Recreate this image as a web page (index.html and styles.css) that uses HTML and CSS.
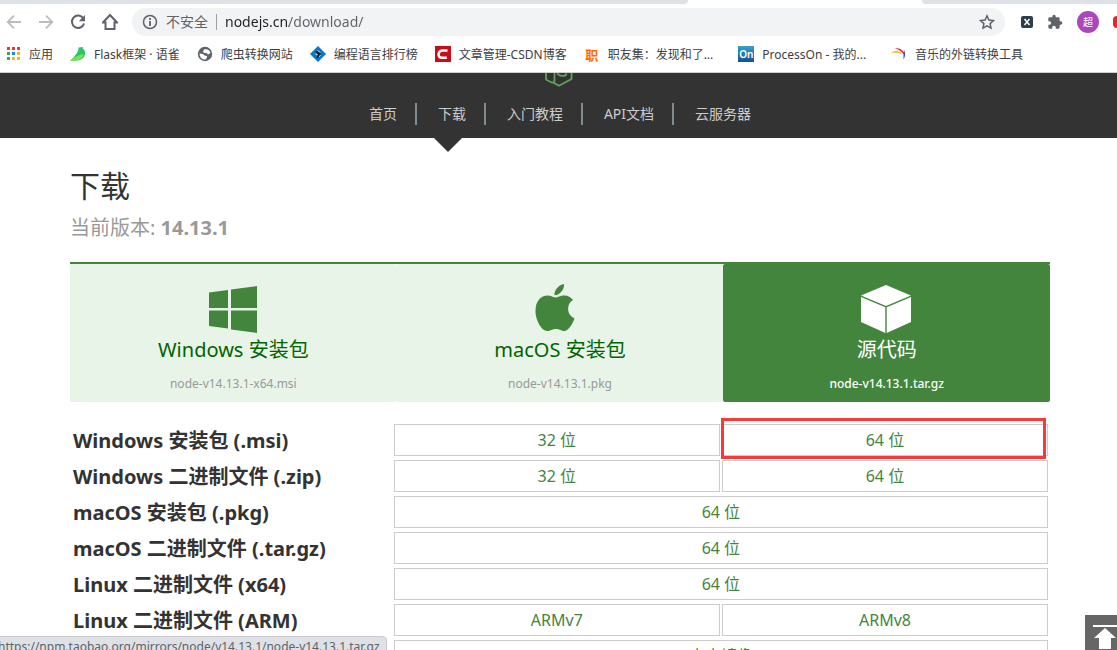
FILE: index.html
```html
<!DOCTYPE html>
<html lang="zh-CN">
<head>
<meta charset="utf-8">
<title>下载 | Node.js 中文网</title>
<link rel="stylesheet" href="styles.css">
</head>
<body>
<div class="browser">
  <div class="tabstrip"><span class="tab-bg"></span><span class="tab-active"></span><span class="tab-bg tab-bg-end"></span></div>
  <div class="toolbar">
    <button class="tool dim" aria-label="后退"><svg width="16" height="16" viewBox="0 0 16 16"><path d="M15 8H2M8 1.700L1.700 8 8 14.300" fill="none" stroke="currentColor" stroke-width="1.800"/></svg></button>
    <button class="tool dim" aria-label="前进"><svg width="16" height="16" viewBox="0 0 16 16"><path d="M1 8h13M8 1.700L14.300 8 8 14.300" fill="none" stroke="currentColor" stroke-width="1.800"/></svg></button>
    <button class="tool" aria-label="重新加载"><svg width="16" height="16" viewBox="0 0 16 16"><path d="M13.300 4.200A6.200 6.200 0 1 0 14.100 9.500" fill="none" stroke="currentColor" stroke-width="2"/><path d="M15 1v6.200H8.800z" fill="currentColor"/></svg></button>
    <button class="tool" aria-label="主页"><svg width="16" height="18" viewBox="1 0 16 18"><path d="M9 2L2 9.500h2.500v6.500h9V9.500H16z" fill="none" stroke="currentColor" stroke-width="2"/></svg></button>
    <div class="omnibox">
      <svg width="16" height="16" viewBox="0 0 16 16"><circle cx="8" cy="8" r="6.500" fill="none" stroke="#5f6368" stroke-width="1.500"/><path d="M8 7v5M8 4v2" stroke="#5f6368" stroke-width="1.800"/></svg>
      <span class="insecure">不安全</span>
      <input class="url" type="text" aria-label="网址" value="nodejs.cn/download/">
      <button class="tool star" aria-label="添加书签"><svg width="16" height="16" viewBox="0 0 16 16"><path d="M8 1.800l1.900 4.200 4.600.500-3.400 3.100.900 4.500L8 11.800l-4 2.300.900-4.500L1.500 6.500 6.100 6z" fill="none" stroke="currentColor" stroke-width="1.500"/></svg></button>
    </div>
    <div class="extensions">
      <button class="tool" aria-label="扩展 X"><svg width="12" height="12" viewBox="0 0 12 12"><rect width="12" height="12" rx="2" fill="#2d3e48"/><path d="M3.500 3l5 6M8.500 3l-5 6" stroke="#fff" stroke-width="1.500"/></svg></button>
      <button class="tool" aria-label="扩展程序"><svg width="16" height="16" viewBox="0 0 24 24"><path d="M20.500 11H19V7a2 2 0 0 0-2-2h-4V3.500a2.500 2.500 0 0 0-5 0V5H4a2 2 0 0 0-2 2v3.800h1.500a2.700 2.700 0 0 1 0 5.400H2V20a2 2 0 0 0 2 2h3.800v-1.500a2.700 2.700 0 0 1 5.400 0V22H17a2 2 0 0 0 2-2v-4h1.500a2.500 2.500 0 0 0 0-5z" fill="#5f6368"/></svg></button>
      <button class="avatar">超</button>
      <span class="update"></span>
    </div>
  </div>
  <nav class="bookmarks" aria-label="书签">
    <a href="#"><svg width="14" height="14" viewBox="0 0 14 14"><path fill="#ea3b30" d="M0 0h3v3H0zM5 0h3v3H5zM10 0h3v3h-3z"/><path fill="#34a853" d="M0 5h3v3H0zM0 10h3v3H0z"/><path fill="#1a84f0" d="M5 5h3v3H5z"/><path fill="#fbb904" d="M10 5h3v3h-3zM5 10h3v3H5zM10 10h3v3h-3z"/></svg>应用</a>
    <a href="#"><svg width="16" height="16" viewBox="0 0 16 16"><path fill="#26c66c" d="M8.500 1.500L13 1l-.5 1.500c3 1 3.500 6 1 9-2 2.500-5 3.500-13.500 3.500C5 10 9 6 8.500 1.500z"/><path fill="#7be05a" d="M0 15C5 11 8 9 13.500 8c-.5 5-5 7-13.500 7z"/></svg>Flask框架 · 语雀</a>
    <a href="#"><svg width="16" height="16" viewBox="0 0 16 16"><circle cx="8" cy="8" r="7.200" fill="#5f6368"/><path d="M7 3.500C10 2.500 13 4 13.500 7L11 8.500 9.500 7H7L6 5.500zM2.500 7.500L6 8l1.500 1.500L10 10v1.500L8.500 13.500C5 14 2.500 11 2.500 7.500z" fill="#fff"/></svg>爬虫转换网站</a>
    <a href="#"><svg width="16" height="16" viewBox="0 0 16 16"><path d="M8 0l8 8-8 8-8-8z" fill="#0878c9"/><path d="M5 5h3l3 3-3 4H6l2-3z" fill="#101820"/><path d="M8 4.500l2 2M5.500 8l2 .5M9 10.500l1.500-1" stroke="#fff"/></svg>编程语言排行榜</a>
    <a href="#"><svg width="16" height="16" viewBox="0 0 16 16"><path fill="#ca0c16" d="M0 0h16v16H0z"/><path d="M12.500 4.500H8C2.500 4.500 2 11.800 7 11.800h4.800" fill="none" stroke="#fff" stroke-width="2.500"/></svg>文章管理-CSDN博客</a>
    <a class="truncated" href="#"><span class="fav-zhi">职</span>职友集：发现和了...</a>
    <a class="truncated" href="#"><span class="fav-on">On</span>ProcessOn - 我的...</a>
    <a href="#"><svg width="16" height="16" viewBox="0 0 16 16"><path d="M0 7c3-2.500 6-2.500 10-.5v1.200C6 6.500 3 6.500 0 7z" fill="#fdbb30"/><path d="M4 2.500c5-1 9 2 10 7l-2.500-2.500C10 5 8 3.500 4 2.500z" fill="#ee2028"/><path d="M13 4c1.500 3 1.500 6-.5 9.500V9z" fill="#2848b8"/></svg>音乐的外链转换工具</a>
  </nav>
</div>
<div class="page">
  <header class="site-header">
    <svg class="logo" width="28" height="14" viewBox="0 0 28 14"><path d="M1 0v6.500l6 3.200c1.600 0 2.500-.800 2.500-2.500V0M26.500 0v6L14 12.700l-5.200-2.800M12.500 0c1 3.800 8.500 3.800 9 .500" fill="none" stroke="#5fa35a" stroke-width="1.800"/></svg>
    <nav aria-label="主导航">
      <ul class="menu">
        <li><a href="#">首页</a></li>
        <li class="active"><a href="#">下载</a></li>
        <li><a href="#">入门教程</a></li>
        <li><a href="#">API文档</a></li>
        <li><a href="#">云服务器</a></li>
      </ul>
    </nav>
  </header>
  <main class="content">
    <h1>下载</h1>
    <p class="version">当前版本: <strong>14.13.1</strong></p>
    <div class="platforms">
      <a class="platform" href="#"><svg width="50" height="50" viewBox="0 0 50 50"><path fill="currentColor" d="M2 8.500L21 6v18H2zM24 5.500L50 2v22H24zM2 26.500h19v18L2 42zM24 26.500h26V49l-26-3.500z"/></svg><span class="name">Windows 安装包</span><span class="file">node-v14.13.1-x64.msi</span></a>
      <a class="platform" href="#"><svg width="50" height="50" viewBox="4 0 50 50"><path fill="currentColor" d="M34 0c.5 5.500-4 11-9.500 11.300C24 6 29 .8 34 0zM25.500 13.500c2.500 0 4.500-2 9-2 3.500 0 6.500 1.800 8.500 4.500-7 4-6.500 15 1.500 18.500-1.500 4.500-5.500 12-10 12.500-3.500 0-4.500-2-8.700-2-4 0-5 2-8.500 2C11.500 47 5.500 36 5.500 27c0-10 5.500-15.500 12-15.500 3.500 0 6 2 8 2z"/></svg><span class="name">macOS 安装包</span><span class="file">node-v14.13.1.pkg</span></a>
      <a class="platform selected" href="#"><svg width="50" height="50" viewBox="0 0 50 50"><path fill="currentColor" d="M25 1l25 10.500L25 22 0 11.500zM0 13l24.300 10.200V49L0 38zM50 13L25.700 23.200V49L50 38z"/></svg><span class="name">源代码</span><span class="file">node-v14.13.1.tar.gz</span></a>
    </div>
    <table class="downloads">
      <colgroup><col class="col-label"><col><col></colgroup>
      <tbody>
        <tr><th scope="row">Windows 安装包 (.msi)</th><td><a href="#">32 位</a></td><td class="marked"><a href="#">64 位</a></td></tr>
        <tr><th scope="row">Windows 二进制文件 (.zip)</th><td><a href="#">32 位</a></td><td><a href="#">64 位</a></td></tr>
        <tr><th scope="row">macOS 安装包 (.pkg)</th><td colspan="2"><a href="#">64 位</a></td></tr>
        <tr><th scope="row">macOS 二进制文件 (.tar.gz)</th><td colspan="2"><a href="#">64 位</a></td></tr>
        <tr><th scope="row">Linux 二进制文件 (x64)</th><td colspan="2"><a href="#">64 位</a></td></tr>
        <tr><th scope="row">Linux 二进制文件 (ARM)</th><td><a href="#">ARMv7</a></td><td><a href="#">ARMv8</a></td></tr>
        <tr><th scope="row"></th><td colspan="2"><a href="#">官方镜像</a></td></tr>
      </tbody>
    </table>
  </main>
  <div class="status">https://npm.taobao.org/mirrors/node/v14.13.1/node-v14.13.1.tar.gz</div>
  <button class="to-top" aria-label="返回顶部"><svg width="24" height="24" viewBox="0 0 24 24"><path fill="#fff" d="M0 0h24v2H0zM12 3l11 10h-5v11H6V13H1z"/></svg></button>
</div>
</body>
</html>
```
FILE: styles.css
```css
* { box-sizing: border-box; }
body {
  margin: 0;
  height: 100vh;
  display: flex;
  flex-direction: column;
  overflow: hidden;
  background: #fff;
  color: #333;
  font-family: "Noto Sans", "Noto Sans CJK SC", sans-serif;
}
a { color: inherit; text-decoration: none; }
button { border: 0; padding: 0; background: none; color: inherit; font: inherit; }
svg { display: block; flex: none; }

.browser { flex: none; border-bottom: 1px solid #d0d0d0; color: #3c4043; }
.tabstrip { display: flex; height: 4px; }
.tab-bg { flex: 688; background: #dee1e6; border-bottom-right-radius: 4px; }
.tab-active { flex: 234; }
.tab-bg-end { flex: 195; border-radius: 0 0 0 4px; }
.toolbar { display: flex; align-items: center; height: 36px; padding-left: 6px; gap: 16px; color: #5f6368; }
.tool { flex: none; }
.dim { color: #babcbe; }
.omnibox {
  flex: 1;
  display: flex;
  align-items: center;
  height: 28px;
  margin-left: -2px;
  padding: 0 10px;
  border-radius: 14px;
  background: #f1f3f4;
  font-size: 14px;
  line-height: 20px;
}
.insecure { margin-left: 8px; padding-right: 8px; border-right: 1px solid #9aa0a6; line-height: 16px; }
.url {
  flex: 1;
  min-width: 0;
  margin-left: 8px;
  padding: 0;
  border: 0;
  outline: 0;
  background: linear-gradient(90deg, #202124 64px, #5f6368 64px);
  background-clip: text;
  -webkit-background-clip: text;
  color: transparent;
  font: inherit;
}
.extensions { display: flex; align-items: center; gap: 14px; }
.avatar { width: 22px; height: 22px; border-radius: 50%; background: #ab47bc; color: #fff; font-size: 10px; line-height: 22px; }
.update { width: 4px; height: 12px; border-radius: 6px 0 0 6px; background: #d93025; }
.bookmarks { display: flex; align-items: center; gap: 17px; height: 32px; padding: 0 7px 4px; font-size: 12px; white-space: nowrap; }
.bookmarks a { display: flex; align-items: center; gap: 8px; }
.bookmarks .truncated { padding-right: 8px; }
.fav-zhi { width: 16px; color: #ff6a00; font-weight: 700; font-size: 13px; text-align: center; }
.fav-on { width: 16px; height: 16px; background: linear-gradient(#35a3c4, #174f95); color: #fff; font-size: 10px; font-weight: 600; line-height: 16px; text-align: center; }

.page { position: relative; flex: 1; min-height: 0; overflow: hidden; }
.site-header { display: flex; flex-direction: column; align-items: center; height: 65px; background: #333; }
.menu { display: flex; margin: 0; padding: 16px 0 0; list-style: none; color: #ccc; font-size: 14px; line-height: 22px; }
.menu li { position: relative; padding: 0 18px 0 21px; border-right: 2px solid #808c90; }
.menu li:last-child { border-right: 0; }
.menu .active::after {
  content: "";
  position: absolute;
  top: 35px;
  left: 17px;
  border: 14px solid transparent;
  border-bottom: 0;
  border-top-color: #333;
}
.content { padding: 30px 67px 0 70px; }
h1 { margin: 0; font-size: 30px; font-weight: 400; line-height: 36px; }
.version { margin: 10px 0 20px; color: #999; font-size: 20px; line-height: 28px; }
.platforms { display: flex; border-top: 2px solid #43853d; }
.platform {
  flex: 1;
  display: flex;
  flex-direction: column;
  align-items: center;
  height: 138px;
  padding-top: 20px;
  border-radius: 2px;
  background: #e8f4e8;
  color: #43853d;
}
.platform svg { margin-right: 2px; }
.name { color: #006400; font-size: 20px; line-height: 32px; }
.file { margin-top: 8px; color: #999; font-size: 12px; line-height: 20px; }
.selected { background: #43853d; color: #fff; }
.selected .name { color: #fff; }
.selected .file { color: #fff; font-weight: 500; }
.downloads { width: 100%; margin-top: 18px; table-layout: fixed; border-spacing: 2px 4px; }
.col-label { width: 32.9%; }
.downloads th { padding: 2px 0 0 1px; text-align: left; font-size: 20px; line-height: 30px; white-space: nowrap; }
.downloads td { position: relative; padding: 0; }
.downloads td a { display: block; border: 1px solid #ccc; color: #43853d; font-size: 16px; line-height: 30px; text-align: center; }
.marked::after { content: ""; position: absolute; inset: -6px 2px -3px -1px; border: 3px solid #f93a3a; }
.status {
  position: absolute;
  left: -3px;
  bottom: -8px;
  padding: 0 6px 0 0;
  border: 1px solid #c8cacd;
  border-radius: 0 4px 0 0;
  background: #dee1e6;
  color: #5f6368;
  font-size: 12px;
  line-height: 20px;
}
.to-top { position: absolute; right: 0; bottom: 0; width: 32px; height: 35px; padding: 9px 0 0 8px; background: #666; overflow: hidden; }
```
